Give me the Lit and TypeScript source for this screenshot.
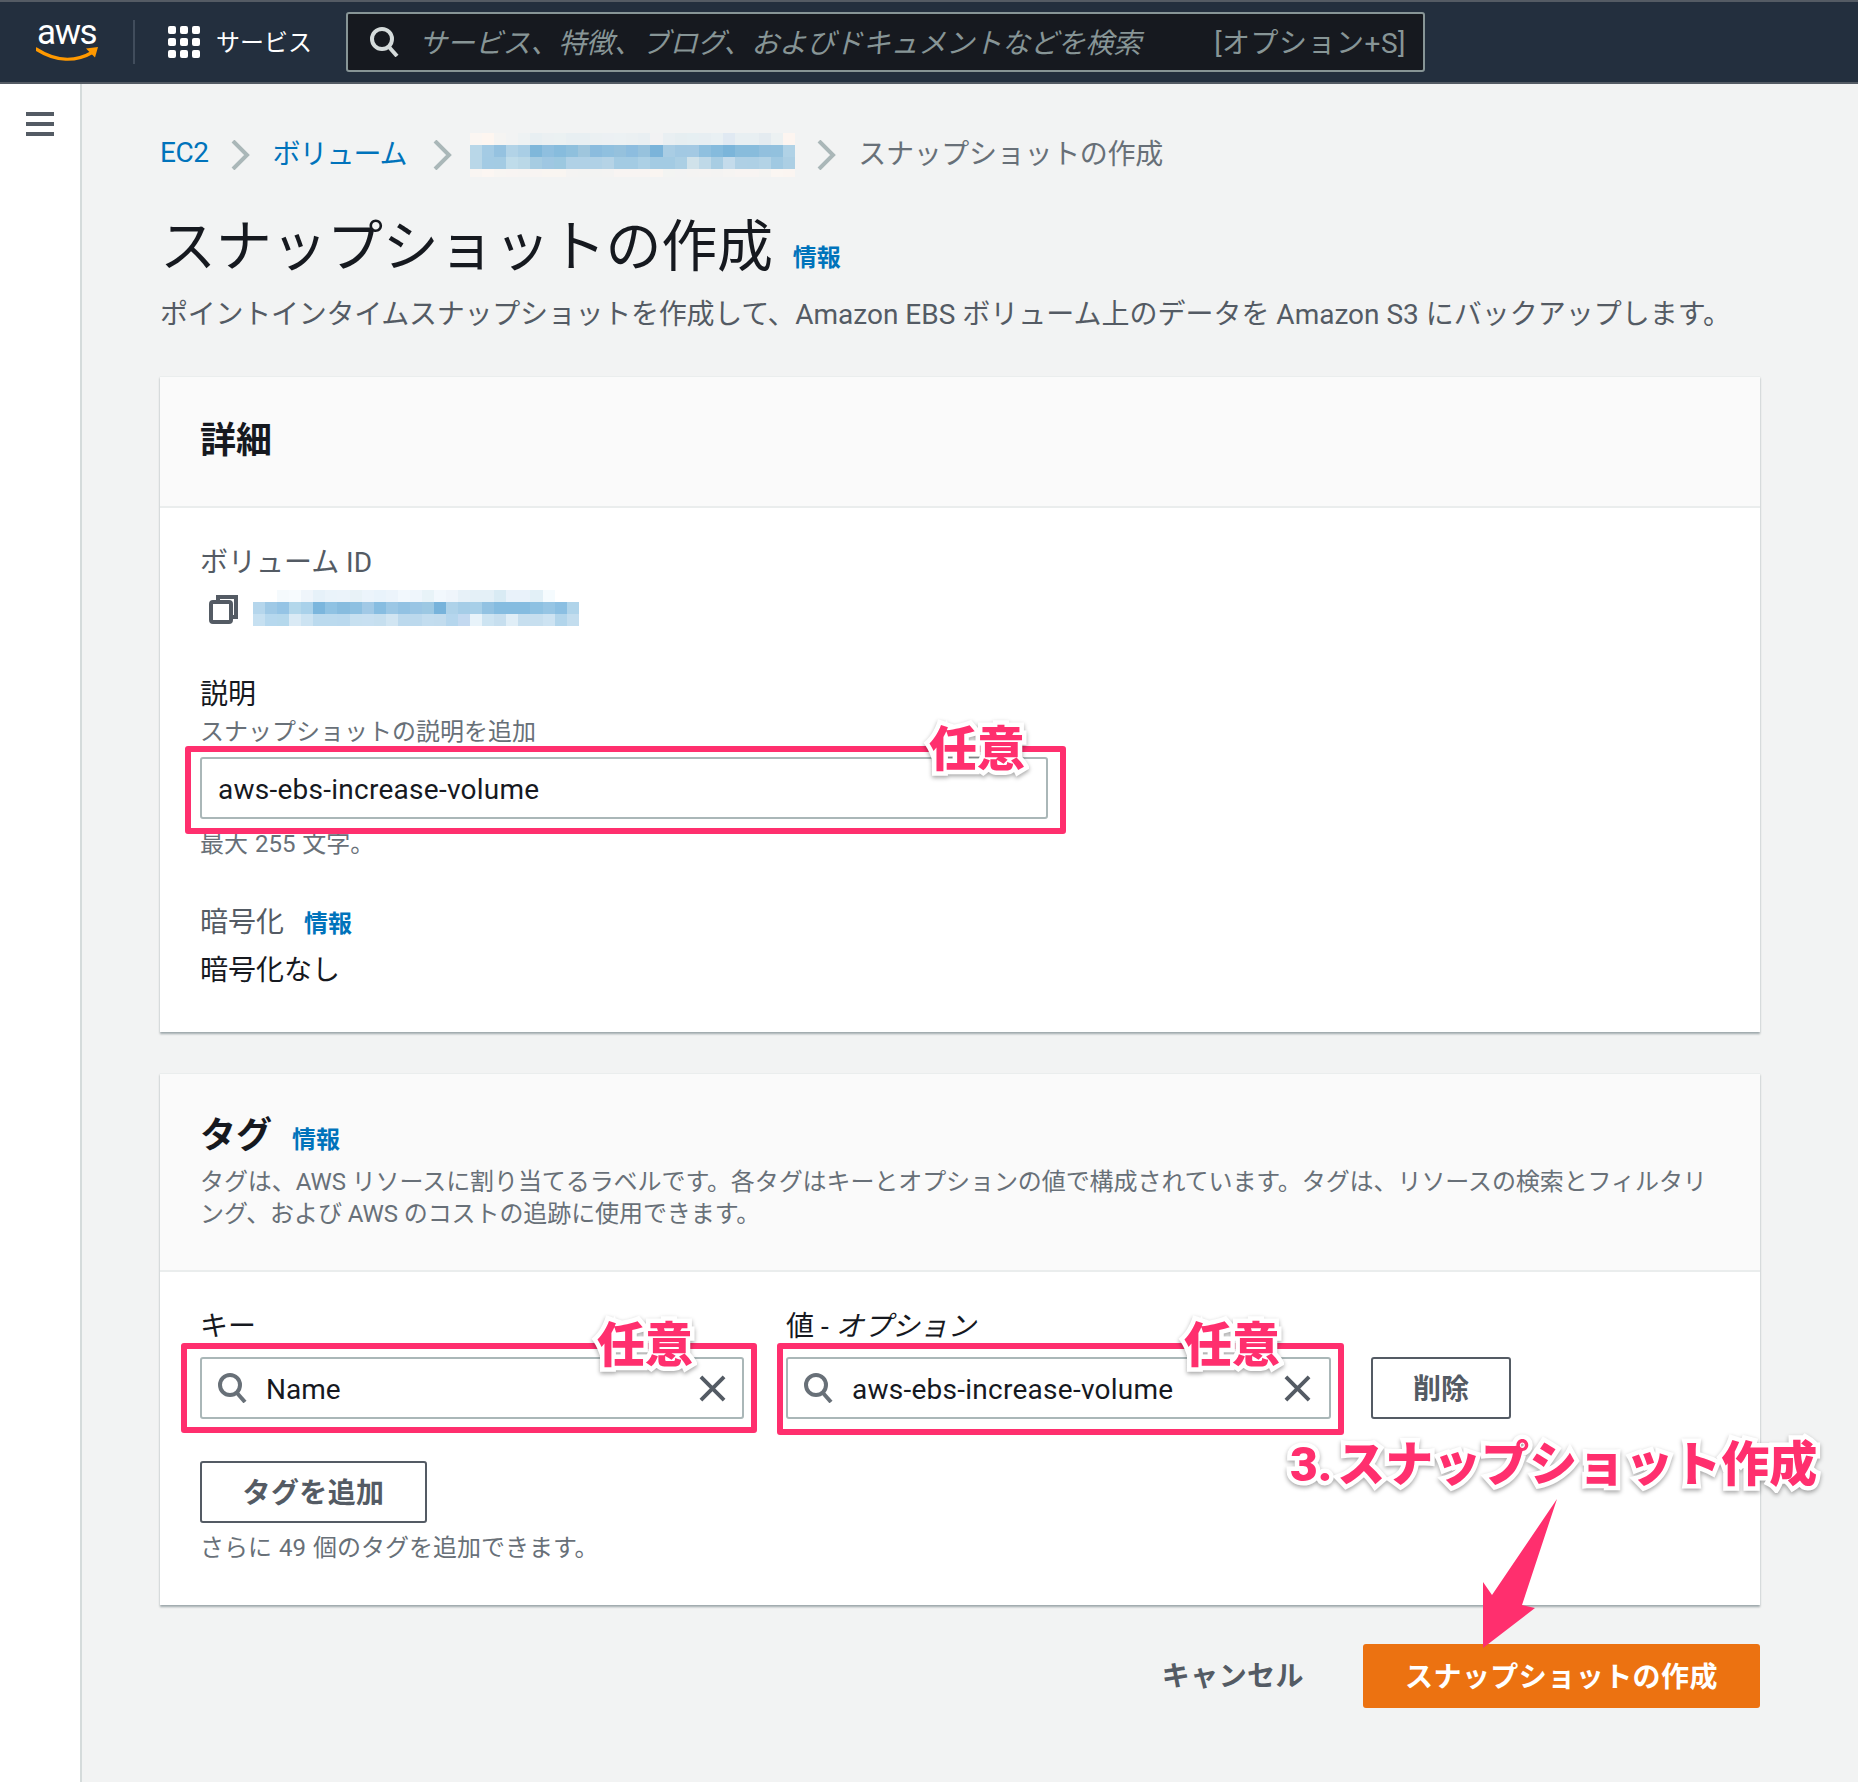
import { LitElement, html, css, svg } from "lit";
import { customElement } from "lit/decorators.js";

const crumbMosaic = [
  "fbf6f2 fef6f0 f5f4f2 f2f3f3 eef2f3 e8eff2 ebf0f2 ebf1f2 e8eff2 e8eff2 ebf0f2 ecf0f3 ecf1f3 ebf0f2 e9eff2 f2f2f3 e9eff2 e6eef1 e6eff2 e7eef2 e9f0f3 e0e9f2 e8eff2 e8eff2 e4ebf0 ecf1f2 fdf5f0",
  "b9d7e8 a4cbe4 95c2e0 b2d3e7 a9cee5 7fb7da 8fbfdf 87bcdd 8fc0dd 9fc6dd 8bbcde 90c0df 95c1dd 8dbddf 97c2dd 7bb4da a9cde4 a2c9e3 a3c9e3 8fc0df 85bbdd 7bb5da 88bcdc 88bcdc 92c0de 92c1de b0d2e6",
  "b9d7e8 a3cbe4 a3cbe3 bfdcea bad8e7 a6cce2 9fc7e2 9cc8e0 b0d1e6 b0d1e6 b0d1e6 b5d3e6 a3cbe3 a3cbe3 acd0e5 a3cbe3 a3cbe3 abcfe4 d0e2ea bfd9e8 a8cde3 c4dbeb afd0e5 aed0e5 b3d3e6 a0c9e2 accfe4",
  "f9f5f2 fcf6f2 f8f5f2 f8f4f2 f7f4f2 f8f4f2 f9f5f1 f9f5f1 f4f3f2 f3f3f2 f3f3f2 f4f3f2 f8f4f2 f8f4f2 f8f4f2 faf5f1 f3f4f2 f3f3f3 f4f3f2 f5f3f2 f4f3f2 f6f4f2 f8f4f2 f8f4f2 f5f4f2 fbf6f2 fbf5f1",
];
const idMosaic = [
  "ffffff ffffff f5fafd f7fbfe eff5fb e6f1f9 eaf3fa ebf3fa e8f2f7 ecf4fb e9f3fb ecf4fb f2f8fd eff6fc e8f3f8 f2f8fd eff5fb e7f1f8 e4f0f7 e4f0f7 d9ebf4 e9f2fa e9f2fa e2f0f7 f5fbfe ffffff ffffff",
  "b5d6ec 9fc9e6 95c4e5 b3d7eb a9d1ea 7bb6dd 8fc2e3 87bcdf 8dc0e1 a1c9e6 87bde1 9bc7e5 92c2e3 99c5e4 9cc8e3 77b3db aed2e9 a5cde7 a7cfe8 92c2e2 85bce0 85bce0 85bce0 8dc1e2 96c5e4 8bbfe2 b0d4ea",
  "c6e0f1 b6d8ee b5d8ec daeaf5 cce3f2 bbdaee bbdaee bad9ee c7e0f0 c8e0f1 c6dfef d1e5f2 bcd9ed bcd9ed c3ddef c2dcee b5d6ed c3d9f0 e8f3fa cde4f2 c7dfef e0eef7 c7dfef c7dfef cde3f2 b2d5eb c3ddee",
];

const mosaic = (rows: string[], cls: string) => html`<div class="mosaic ${cls}">
  ${rows.flatMap((r) => r.split(" ")).map((c) => html`<span style="background:#${c}"></span>`)}
</div>`;

const searchIcon = (cls: string) => html`<svg class=${cls} viewBox="0 0 30 30" fill="none" stroke="currentColor" stroke-width="4">
  ${svg`<circle cx="13" cy="12" r="10"/><path d="M20 20l8 9"/>`}
</svg>`;
const closeIcon = html`<svg class="x" viewBox="0 0 28 28" fill="none" stroke="#545b64" stroke-width="4">
  ${svg`<path d="M2 2l24 24M26 2L2 26"/>`}
</svg>`;
const chevron = (cls: string) => html`<svg class="chev ${cls}" viewBox="0 0 20 30" fill="none" stroke="#aab7b8" stroke-width="4">
  ${svg`<path d="M3 1l14 14L3 29"/>`}
</svg>`;

@customElement("app-root")
export class AppRoot extends LitElement {
  static styles = css`
    :host {
      display: block;
      position: relative;
      width: 1858px;
      min-height: 1782px;
      background: #f2f3f3;
      overflow: hidden;
      font-family: Roboto, "Noto Sans CJK JP", sans-serif;
      font-size: 28px;
      color: #16191f;
    }
    .top {
      height: 84px;
      box-sizing: border-box;
      background: #232f3e;
      border-top: 2px solid #545b64;
      border-bottom: 2px solid #545b64;
      display: flex;
      align-items: center;
      padding-left: 36px;
    }
    .logo { width: 63px; height: 44px; flex: none; display: flex; flex-direction: column; }
    .logo b { font-weight: 400; font-size: 35px; line-height: 26px; letter-spacing: -1.4px; color: #fff; padding-left: 1px; }
    .logo svg { width: 63px; height: 18px; }
    .divider { width: 2px; height: 44px; background: #414d5c; margin: 0 33px 0 34px; flex: none; }
    .grid9 { display: grid; grid-template-columns: repeat(3, 8px); gap: 4px; flex: none; }
    .grid9 i { height: 8px; background: #fff; border-radius: 2px; }
    .svc { color: #fff; font-size: 24px; margin: 0 0 4px 16px; width: 95px; white-space: nowrap; }
    .search {
      margin-left: 35px;
      width: 1079px;
      height: 60px;
      box-sizing: border-box;
      background: #16191f;
      border: 2px solid #879596;
      border-radius: 3px;
      display: flex;
      align-items: center;
      padding: 0 17px 0 21px;
      color: #879596;
    }
    .search .hi { width: 30px; height: 30px; color: #d5dbdb; flex: none; }
    .search em { margin: 0 0 2px 20px; flex: 1; white-space: nowrap; letter-spacing: -0.15px; }
    .search span { white-space: nowrap; letter-spacing: 0.5px; margin-bottom: 2px; }

    .shell { display: flex; align-items: stretch; }
    .side {
      width: 82px;
      box-sizing: border-box;
      background: #fff;
      border-right: 2px solid #d5dbdb;
      padding: 28px 0 0 26px;
      flex: none;
    }
    .ham { display: flex; flex-direction: column; gap: 6px; width: 28px; }
    .ham i { height: 4px; background: #545b64; }
    .main { width: 1600px; margin-left: 78px; padding-bottom: 74px; }

    .crumbs { display: flex; align-items: center; height: 44px; margin-top: 49px; white-space: nowrap; }
    .crumbs a { color: #0073bb; margin-bottom: 6px; }
    .crumbs .ec { letter-spacing: -0.5px; }
    .crumbs .vol { letter-spacing: -1px; }
    .crumbs .cur { color: #687078; margin-bottom: 6px; letter-spacing: -0.3px; }
    .chev { width: 20px; height: 30px; flex: none; }
    .ch1 { margin: 0 22px 0 22px; }
    .ch2 { margin: 0 18px 0 25px; }
    .ch3 { margin: 0 22px 0 21px; }
    .mosaic { display: grid; grid-template-columns: repeat(27, 12.07px); grid-auto-rows: 12px; flex: none; }
    .m-crumb { grid-template-rows: 12px 12px 12px 8px; }

    h1 { margin: 38px 0 0; font-weight: 400; font-size: 56px; line-height: 64px; display: flex; align-items: baseline; white-space: nowrap; letter-spacing: -0.3px; }
    h1 .info { margin-left: 20px; letter-spacing: 0; }
    .info { font-size: 24px; font-weight: 700; color: #0073bb; line-height: 32px; }
    .lede { margin-top: 16px; line-height: 40px; color: #545b64; white-space: nowrap; }
    .lede span { letter-spacing: -0.26px; }

    .card { background: #fff; border-top: 1px solid #eaeded; box-shadow: 0 2px 2px rgba(0, 28, 36, 0.35); box-sizing: border-box; }
    .c1 { margin-top: 41px; height: 656px; }
    .c2 { margin-top: 41px; height: 532px; }
    .chead { background: #fafafa; border-bottom: 2px solid #eaeded; padding: 0 40px; box-sizing: border-box; }
    .c1 .chead { height: 131px; display: flex; align-items: center; padding-bottom: 2px; }
    .c2 .chead { height: 198px; padding-top: 40px; }
    h2 { margin: 0; font-size: 36px; font-weight: 700; line-height: 44px; display: flex; align-items: baseline; gap: 20px; }
    .cdesc { margin-top: 8px; font-size: 24px; line-height: 32px; color: #687078; white-space: nowrap; letter-spacing: -0.08px; }
    .cbody { padding: 0 40px; }
    .c1 .cbody { padding-top: 35px; }
    .c2 .cbody { padding-top: 35px; }

    .lab { line-height: 40px; }
    .muted { color: #545b64; }
    .idrow { display: flex; margin-top: 7px; height: 36px; align-items: flex-end; }
    .copy { width: 30px; height: 30px; margin: 2px 14px 0 9px; flex: none; align-self: center; }
    .small { font-size: 24px; line-height: 32px; color: #687078; word-spacing: 1px; }
    .lab.desc { margin-top: 49px; }
    .small.con { margin-top: 1px; }
    .input {
      position: relative;
      height: 62px;
      box-sizing: border-box;
      background: #fff;
      border: 2px solid #aab7b8;
      border-radius: 3px;
      display: flex;
      align-items: center;
      padding: 2px 16px 0 15px;
      color: #16191f;
      white-space: nowrap;
    }
    .input.one { margin-top: 9px; width: 848px; padding-left: 16px; }
    .input.two { padding-right: 18px; }
    .input .text { flex: 1; }
    .input .vol { letter-spacing: 0.26px; }
    .input .hi { width: 30px; height: 30px; color: #687078; margin-right: 19px; flex: none; margin-top: -2px; }
    .x { width: 27px; height: 27px; flex: none; margin-top: -2px; }
    .small.max { margin-top: 9px; }
    .enc { margin-top: 43px; display: flex; align-items: baseline; gap: 20px; }
    .enc .muted { line-height: 40px; }
    .encv { margin-top: 8px; line-height: 40px; }

    .row { display: grid; grid-template-columns: 544px 545px 138px; column-gap: 42px; align-items: end; }
    .row .btn { margin-left: -2px; }
    .fld .input { margin-top: 10px; }
    .btn {
      height: 62px;
      box-sizing: border-box;
      border: 2px solid #545b64;
      border-radius: 3px;
      background: #fff;
      color: #545b64;
      font-weight: 700;
      display: flex;
      align-items: center;
      justify-content: center;
      white-space: nowrap;
      padding-bottom: 2px;
    }
    .add { width: 227px; margin-top: 42px; letter-spacing: 0.4px; }
    .small.hint { margin-top: 9px; }

    .foot { display: flex; justify-content: flex-end; align-items: center; gap: 59px; margin-top: 39px; font-weight: 700; letter-spacing: 0.45px; }
    .cancel { color: #545b64; margin-bottom: 4px; }
    .primary { width: 397px; height: 64px; box-sizing: border-box; padding-bottom: 2px; background: #ec7211; color: #fff; border-radius: 3px; display: flex; align-items: center; justify-content: center; }

    .mark { position: absolute; border: 6px solid #ff2f6e; border-radius: 3px; pointer-events: none; }
    .mk0 { left: -17px; right: -20px; top: -13px; bottom: -17px; }
    .mk1 { left: -21px; right: -15px; top: -16px; bottom: -16px; }
    .mk2 { left: -11px; right: -15px; top: -16px; bottom: -18px; }
    .tag, .big {
      position: absolute;
      font-weight: 900;
      font-size: 48px;
      line-height: 48px;
      color: #ff2f6e;
      white-space: nowrap;
      -webkit-text-stroke: 9px #fff;
      paint-order: stroke fill;
      filter: drop-shadow(0 2px 2px rgba(0, 0, 0, 0.35));
    }
    .tag { top: -27px; }
    .mk0 .tag { top: -26px; right: 35px; }
    .mk1 .tag { right: 58px; }
    .mk2 .tag { right: 58px; }
    .big { left: 1290px; top: 1441px; }
    .big span { margin-right: 5px; }
    .arrow { position: absolute; left: 1478px; top: 1498px; width: 84px; height: 154px; }
  `;

  render() {
    return html`
      <header class="top">
        <div class="logo">
          <b>aws</b>
          <svg viewBox="0 0 63 18" fill="none">
            ${svg`<path d="M0 3c20 13 40 13 57 3" stroke="#f90" stroke-width="3.4" stroke-linecap="round"/>
            <path d="M50 2.500l12-1.500-3 10.500z" fill="#f90"/>`}
          </svg>
        </div>
        <div class="divider"></div>
        <div class="grid9">${Array.from({ length: 9 }, () => html`<i></i>`)}</div>
        <div class="svc">サービス</div>
        <div class="search">
          ${searchIcon("hi")}
          <em>サービス、特徴、ブログ、およびドキュメントなどを検索</em>
          <span>[オプション+S]</span>
        </div>
      </header>
      <div class="shell">
        <aside class="side"><div class="ham"><i></i><i></i><i></i></div></aside>
        <main class="main">
          <nav class="crumbs">
            <a class="ec">EC2</a>${chevron("ch1")}<a class="vol">ボリューム</a>${chevron("ch2")}${mosaic(crumbMosaic, "m-crumb")}${chevron("ch3")}
            <span class="cur">スナップショットの作成</span>
          </nav>
          <h1>スナップショットの作成<span class="info">情報</span></h1>
          <div class="lede"><span>ポイントインタイムスナップショットを作成して、</span>Amazon EBS ボリューム上のデータを Amazon S3 にバックアップします。</div>

          <section class="card c1">
            <div class="chead"><h2>詳細</h2></div>
            <div class="cbody">
              <div class="lab muted">ボリューム ID</div>
              <div class="idrow">
                <svg class="copy" viewBox="0 0 30 30" fill="none" stroke="#545b64" stroke-width="4">
                  ${svg`<rect x="2" y="8" width="20" height="20" rx="2"/><path d="M9 7V3h18v20h-4"/>`}
                </svg>
                ${mosaic(idMosaic, "m-id")}
              </div>
              <div class="lab desc">説明</div>
              <div class="small con">スナップショットの説明を追加</div>
              <div class="input one">
                <span class="text vol">aws-ebs-increase-volume</span>
                <div class="mark mk0"><span class="tag">任意</span></div>
              </div>
              <div class="small max">最大 255 文字。</div>
              <div class="enc"><span class="muted">暗号化</span><span class="info">情報</span></div>
              <div class="encv">暗号化なし</div>
            </div>
          </section>

          <section class="card c2">
            <div class="chead">
              <h2>タグ <span class="info">情報</span></h2>
              <div class="cdesc">タグは、AWS リソースに割り当てるラベルです。各タグはキーとオプションの値で構成されています。タグは、リソースの検索とフィルタリ<br />ング、および AWS のコストの追跡に使用できます。</div>
            </div>
            <div class="cbody">
              <div class="row">
                <div class="fld">
                  <div class="lab">キー</div>
                  <div class="input">
                    ${searchIcon("hi")}<span class="text">Name</span>${closeIcon}
                    <div class="mark mk1"><span class="tag">任意</span></div>
                  </div>
                </div>
                <div class="fld">
                  <div class="lab">値 - <i>オプション</i></div>
                  <div class="input two">
                    ${searchIcon("hi")}<span class="text vol">aws-ebs-increase-volume</span>${closeIcon}
                    <div class="mark mk2"><span class="tag">任意</span></div>
                  </div>
                </div>
                <div class="btn">削除</div>
              </div>
              <div class="btn add">タグを追加</div>
              <div class="small hint">さらに 49 個のタグを追加できます。</div>
            </div>
          </section>

          <div class="foot">
            <span class="cancel">キャンセル</span>
            <div class="primary">スナップショットの作成</div>
          </div>
        </main>
      </div>
      <div class="big"><span>3.</span>スナップショット作成</div>
      <svg class="arrow" viewBox="0 0 84 154">
        ${svg`<path d="M79 1L44 107 57 110 5 150V84L14 97z" fill="#ff2f6e"/>`}
      </svg>
    `;
  }
}
